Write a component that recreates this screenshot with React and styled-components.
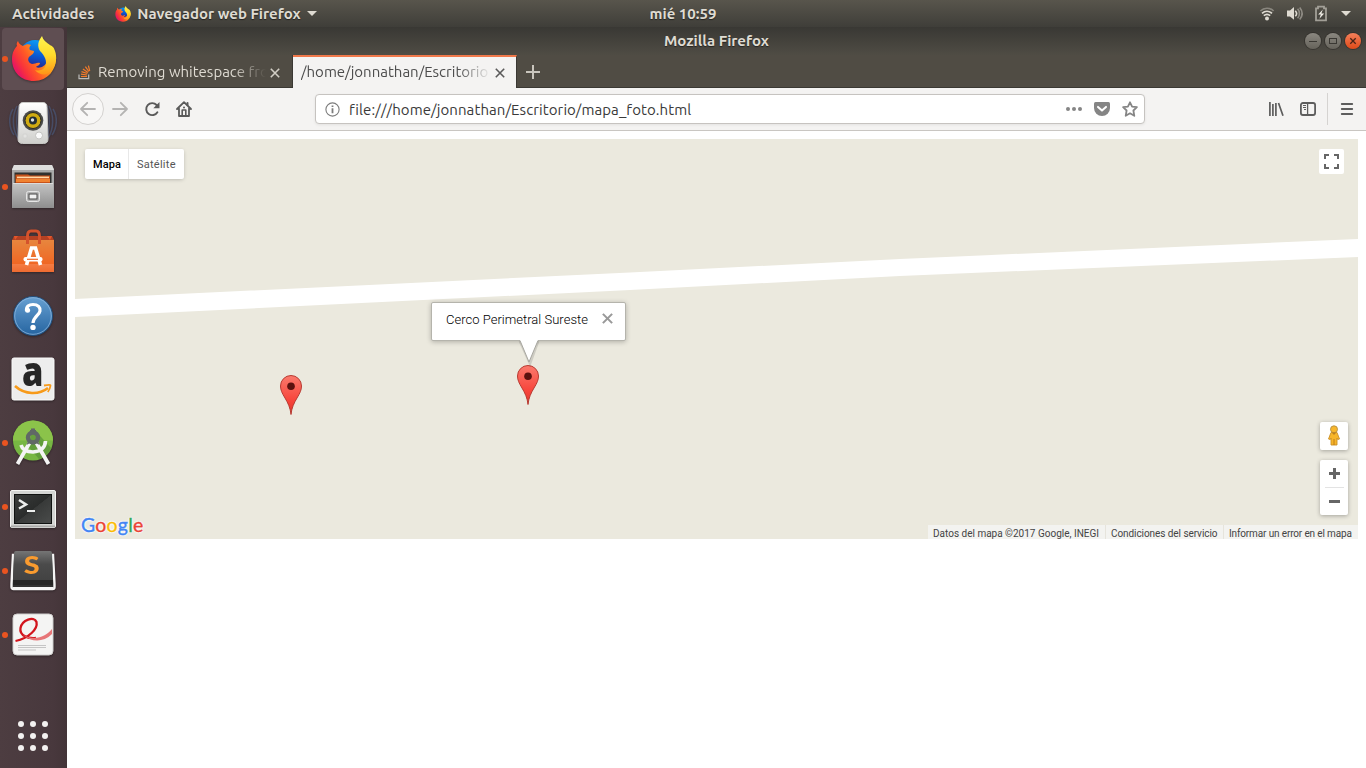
import React from "react";
import styled, { createGlobalStyle } from "styled-components";

const UI = `"Ubuntu", "Noto Sans", "Open Sans", sans-serif`;
const MAP = `"Roboto", Arial, sans-serif`;

const GlobalStyle = createGlobalStyle`
  * { box-sizing: border-box; }
  html, body { margin: 0; height: 100%; overflow: hidden; background: #fff; }
  svg { display: block; flex: none; overflow: visible; }
`;

const Desktop = styled.div`
  width: 1366px;
  height: 768px;
  display: flex;
  flex-direction: column;
  font-family: ${UI};
`;

/* ---------- Top panel ---------- */

const TopPanel = styled.header`
  height: 27px;
  flex: none;
  display: grid;
  grid-template-columns: 1fr auto 1fr;
  align-items: center;
  padding: 0 15px 0 12px;
  background: linear-gradient(#58554c, #3f3e39);
  color: #dfdbd2;
`;

const PanelGroup = styled.div`
  display: flex;
  align-items: center;
  justify-content: ${(p) => (p.$end ? "flex-end" : "flex-start")};
`;

const PanelLabel = styled.span`
  font-size: 15px;
  line-height: 20px;
  font-weight: 600;
  text-shadow: 0 1px 1px rgba(0, 0, 0, 0.5);
  white-space: nowrap;
`;

const Clock = styled(PanelLabel)`
  padding-left: 3px;
`;

const AppMenu = styled.div`
  display: flex;
  align-items: center;
  margin-left: 21px;
  gap: 6px;
`;

const Triangle = styled.i`
  width: 0;
  height: 0;
  border: 5px solid transparent;
  border-top-color: #dfdbd2;
  border-bottom: 0;
`;

const StatusIcons = styled(PanelGroup)`
  gap: 12px;
`;

/* ---------- Dock ---------- */

const Body = styled.div`
  flex: 1;
  min-height: 0;
  display: flex;
`;

const Dock = styled.nav`
  width: 67px;
  flex: none;
  display: flex;
  flex-direction: column;
  background: linear-gradient(90deg, #4d3d41, #48383d 80%, #433438);
`;

const DockItem = styled.div`
  height: 64px;
  flex: none;
  display: flex;
  align-items: center;
  padding: 1px 3px 1px 2px;
`;

const DockTile = styled.div`
  width: 62px;
  height: 62px;
  display: flex;
  align-items: center;
  border-radius: 4px;
  background: ${(p) => (p.$active ? "#5f4e52" : "transparent")};
`;

const RunningDot = styled.i`
  width: 6px;
  height: 6px;
  flex: none;
  border-radius: 50%;
  background: ${(p) => (p.$on ? "#e95420" : "transparent")};
`;

const DockIcon = styled.span`
  margin-left: ${(p) => p.$left}px;
  margin-top: ${(p) => p.$drop || 0}px;
  filter: drop-shadow(0 1px 1px rgba(0, 0, 0, 0.35));
`;

const AppsButton = styled.div`
  margin: auto 0 17px 18px;
`;

/* ---------- Browser window ---------- */

const Window = styled.main`
  flex: 1;
  min-width: 0;
  display: flex;
  flex-direction: column;
  background: #fff;
`;

const TitleBar = styled.div`
  height: 28px;
  flex: none;
  display: grid;
  grid-template-columns: 1fr auto 1fr;
  align-items: center;
  padding: 0 5px 0 5px;
  background: linear-gradient(#393834, #4f4c44);
  color: #dfdbd2;
`;

const WindowTitle = styled(PanelLabel)`
  grid-column: 2;
`;

const WindowButtons = styled.div`
  display: flex;
  justify-content: flex-end;
  gap: 4px;
`;

const WindowButton = styled.span`
  width: 16px;
  height: 16px;
  border-radius: 50%;
  background: ${(p) =>
    p.$close ? "linear-gradient(#f4805b, #df4a18)" : "linear-gradient(#8a8780, #66635b)"};
  box-shadow: 0 0 0 1px rgba(40, 38, 34, 0.5);
`;

const TabStrip = styled.div`
  height: 33px;
  flex: none;
  display: flex;
  background: #504c44;
  box-shadow: inset 0 -1px #3a3833;
`;

const Tab = styled.div`
  width: ${(p) => (p.$active ? "224px" : "226px")};
  display: flex;
  align-items: center;
  padding: ${(p) => (p.$active ? "0 11px 0 8px" : "2px 12px 0 11px")};
  color: ${(p) => (p.$active ? "#4c4c4c" : "#dfdbd2")};
  background: ${(p) => (p.$active ? "#f4f3f2" : "transparent")};
  border-top: ${(p) => (p.$active ? "2px solid #f0784a" : "0")};
  border-right: 1px solid #3a3833;
`;

const TabLabel = styled.span`
  width: ${(p) => p.$width};
  margin-left: ${(p) => p.$indent || "0"};
  margin-right: auto;
  margin-bottom: 2px;
  white-space: nowrap;
  font-size: 15px;
  line-height: 20px;
  mask-image: linear-gradient(90deg, #000 calc(100% - 34px), transparent);
`;

const NewTab = styled.div`
  display: flex;
  align-items: center;
  padding-left: 9px;
`;

const Toolbar = styled.div`
  height: 43px;
  flex: none;
  display: flex;
  align-items: center;
  padding: 0 11px 0 5px;
  background: #f4f3f2;
  border-bottom: 1px solid #c9c6c2;
`;

const NavButtons = styled.div`
  display: flex;
  align-items: center;
  width: 243px;
`;

const BackButton = styled.span`
  width: 32px;
  height: 32px;
  margin-right: 8px;
  display: grid;
  place-items: center;
  border: 1px solid #d4d2d0;
  border-radius: 50%;
  background: #f8f7f6;
`;

const NavIcon = styled.span`
  width: 16px;
  margin-right: 16px;
`;

const UrlBar = styled.div`
  width: 830px;
  height: 30px;
  display: flex;
  align-items: center;
  padding: 0 6px 0 9px;
  border: 1px solid #c6c3c0;
  border-radius: 4px;
  background: #fff;
  box-shadow: 0 1px 3px rgba(0, 0, 0, 0.07);
`;

const UrlText = styled.span`
  flex: 1;
  margin-left: 9px;
  padding-top: 2px;
  color: #3a3a3a;
  font-size: 15px;
  line-height: 20px;
  letter-spacing: 0.09px;
  white-space: nowrap;
`;

const UrlActions = styled.div`
  display: flex;
  align-items: center;
  gap: 12px;
`;

const ToolbarEnd = styled.div`
  margin-left: auto;
  display: flex;
  align-items: center;
  gap: 16px;
`;

const ToolbarDivider = styled.i`
  width: 1px;
  height: 32px;
  background: #d5d3d1;
  margin: 0 -5px 0 -5px;
`;

/* ---------- Map ---------- */

const Page = styled.div`
  flex: 1;
  padding: 8px;
`;

const MapCanvas = styled.section`
  position: relative;
  height: 400px;
  overflow: hidden;
  background: #ebe9de;
  font-family: ${MAP};
`;

const Road = styled.svg`
  width: 100%;
  height: 100%;
`;

const Overlay = styled.div`
  position: absolute;
  top: ${(p) => p.$top};
  right: ${(p) => p.$right};
  bottom: ${(p) => p.$bottom};
  left: ${(p) => p.$left};
`;

const MapTypes = styled.div`
  display: flex;
  height: 30px;
  background: #fff;
  border-radius: 2px;
  box-shadow: 0 1px 4px -1px rgba(0, 0, 0, 0.3);
`;

const MapType = styled.button`
  width: ${(p) => (p.$selected ? "43px" : "56px")};
  padding: 1px 0 0 ${(p) => (p.$selected ? "8px" : "9px")};
  border: 0;
  box-shadow: ${(p) => (p.$selected ? "none" : "inset 1px 0 #e8e8e8")};
  background: none;
  text-align: left;
  font: ${(p) => (p.$selected ? 500 : 400)} 11px/29px ${MAP};
  letter-spacing: ${(p) => (p.$selected ? "0.1px" : "0.25px")};
  color: ${(p) => (p.$selected ? "#000" : "#565656")};
`;

const ControlBox = styled.div`
  width: ${(p) => p.$width || "28px"};
  height: ${(p) => p.$height || "28px"};
  display: flex;
  flex-direction: column;
  align-items: center;
  justify-content: ${(p) => (p.$spread ? "space-evenly" : "center")};
  background: #fff;
  border-radius: 2px;
  box-shadow: ${(p) => (p.$flat ? "none" : "0 1px 4px rgba(0, 0, 0, 0.3)")};
`;

const ControlStack = styled.div`
  display: flex;
  flex-direction: column;
  gap: 10px;
`;

const ZoomDivider = styled.i`
  width: 19px;
  height: 1px;
  background: #e3e3e3;
`;

const InfoBubble = styled.div`
  width: 195px;
  height: 39px;
  display: flex;
  align-items: flex-start;
  padding: 8px 12px 0 14px;
  border: 1px solid #b5b4ac;
  border-radius: 2px;
  background: #fff;
  box-shadow: 0 1px 5px rgba(0, 0, 0, 0.25);
`;

const InfoText = styled.span`
  flex: 1;
  font-size: 13px;
  line-height: 18px;
  font-weight: 300;
  color: #000;
  letter-spacing: 0.02px;
  white-space: nowrap;
`;

const Logo = styled.span`
  font: 400 19.5px/24px "Lato", sans-serif;
  -webkit-text-stroke: 0.4px currentColor;
  letter-spacing: 0.2px;
  text-shadow: 0 0 2px #fff, 0 0 2px #fff, 0 0 3px #fff, 0 0 1px #fff;
`;

const LogoLetter = styled.span`
  color: ${(p) => p.$color};
`;

const Credits = styled.div`
  display: flex;
  height: 14px;
`;

const Credit = styled.span`
  width: ${(p) => p.$width};
  height: 14px;
  padding: 1px 0 0 5px;
  border-left: ${(p) => (p.$first ? "0" : "1px solid #e6e4dc")};
  background: rgba(245, 245, 245, 0.75);
  color: #444;
  font-size: 10px;
  line-height: 15px;
  letter-spacing: ${(p) => p.$spacing};
  white-space: nowrap;
`;

/* ---------- Icons ---------- */

const FirefoxIcon = ({ size, id }) => (
  <svg width={size} height={size} viewBox="0 0 46 46">
    <defs>
      <linearGradient id={`${id}a`} x1="0.9" y1="0.25" x2="0.1" y2="0.7">
        <stop offset="0" stopColor="#ffd52a" />
        <stop offset="0.3" stopColor="#ff9a1c" />
        <stop offset="0.6" stopColor="#ff5a26" />
        <stop offset="0.85" stopColor="#f8313d" />
        <stop offset="1" stopColor="#e8195f" />
      </linearGradient>
      <linearGradient id={`${id}b`} x1="0.6" y1="0" x2="0.4" y2="1">
        <stop offset="0" stopColor="#0a9df5" />
        <stop offset="0.5" stopColor="#0b57d0" />
        <stop offset="1" stopColor="#37106e" />
      </linearGradient>
      <linearGradient id={`${id}c`} x1="0.5" y1="0" x2="0.5" y2="1">
        <stop offset="0" stopColor="#fff44f" />
        <stop offset="0.5" stopColor="#ffdb2c" />
        <stop offset="1" stopColor="#ff9417" />
      </linearGradient>
    </defs>
    <circle cx="24" cy="20" r="16" fill={`url(#${id}b)`} />
    <path
      d="M7 5C8 8 10 9 12 10C15 8 18 8 20 9C18 11 18 13 19 14L23 15C23 18 20 19 18 21C16 24 18 27 21 28C24 28 26 26 29 27C29 29 26 30 25 31C29 33 34 30 36 26C37 22 37 18 35 15L45 20C46 33 37 45 23 45C10 45 1 36 1 23C1 16 4 12 6 10C5 8 6 6 7 5Z"
      fill={`url(#${id}a)`}
    />
    <path
      d="M31 0C27 5 26 10 29 15C33 19 37 25 34 31C31 35 27 35 24 34C28 39 35 40 39 36C46 30 46 20 44 15C43 11 41 10 39 9C35 6 32 4 31 0Z"
      fill={`url(#${id}c)`}
    />
  </svg>
);

const SpeakerIcon = () => (
  <svg width="50" height="50" viewBox="0 0 50 50">
    <defs>
      <linearGradient id="spk" x2="0" y2="1">
        <stop stopColor="#fff" />
        <stop offset="1" stopColor="#cfcfcc" />
      </linearGradient>
    </defs>
    <g fill="none" stroke="#4b5e84" strokeWidth="1.5" opacity="0.6">
      <path d="M9 7C4 16 4 30 10 39M5 10C0 18 1 29 6 36M41 7C46 16 46 30 40 39M45 10C50 18 49 29 44 36M12 5C8 13 7 32 13 41M38 5C42 13 43 32 37 41" />
    </g>
    <path d="M15 3.5H35Q39 3.5 39 8.5L40 40Q40 44.5 35.5 44.5H14.5Q10 44.5 10 40L11 8.5Q11 3.5 15 3.5Z" fill="url(#spk)" stroke="#c7c7c4" />
    <circle cx="25" cy="21.5" r="10.3" fill="#4b4c4c" />
    <circle cx="25" cy="21.5" r="8" fill="#d0ab12" stroke="#2b2b25" />
    <circle cx="25" cy="21.5" r="4" fill="#242f36" />
    <circle cx="24.5" cy="21" r="1.7" fill="#dfe5e7" />
    <circle cx="31" cy="36.5" r="3.5" fill="#fafafa" stroke="#c4c4c2" />
    <rect x="15" y="35" width="4" height="4" rx="1" fill="#e3e3e1" stroke="#d2d2d0" />
  </svg>
);

const FilesIcon = () => (
  <svg width="44" height="46" viewBox="0 0 44 46">
    <defs>
      <linearGradient id="fil" x2="0" y2="1">
        <stop stopColor="#c4c4c4" />
        <stop offset="1" stopColor="#8e8e8e" />
      </linearGradient>
    </defs>
    <path d="M3 1H41L43 5V44H1V5Z" fill="#a9a9a9" />
    <path d="M3 1H41L43 6H1Z" fill="#dededd" />
    <rect x="3.5" y="8.5" width="37" height="11" fill="#30302f" />
    <path d="M4.5 10.5H17L19 11.5H39V19H4.5Z" fill="#c9531a" />
    <path d="M6 13.4H38" stroke="#ffd9a8" strokeWidth="1.6" />
    <path d="M5 16.4H39" stroke="#f08231" strokeWidth="3" />
    <path d="M2 19H42L43 44H1Z" fill="url(#fil)" />
    <path d="M2 19.5H42" stroke="#dcdcdc" />
    <rect x="15.5" y="27.5" width="13" height="10" rx="2" fill="#b3b3b3" stroke="#e6e6e6" />
    <rect x="18" y="30" width="8" height="5" fill="#f1f1f1" stroke="#464646" />
  </svg>
);

const SoftwareIcon = () => (
  <svg width="44" height="46" viewBox="0 0 44 46">
    <defs>
      <linearGradient id="sof" x2="0" y2="1">
        <stop stopColor="#e7863e" />
        <stop offset="0.75" stopColor="#f06724" />
        <stop offset="0.76" stopColor="#f47c43" />
        <stop offset="1" stopColor="#ee6b31" />
      </linearGradient>
    </defs>
    <path d="M1 11L3 7H41L43 11Z" fill="#b34123" />
    <rect x="1" y="11" width="42" height="32" fill="url(#sof)" />
    <path d="M3 7L4 11L7 7M41 7L39 11L36 7" fill="#e4562b" />
    <path d="M16.5 15V7Q16.5 2 20 2H25Q28.5 2 28.5 7V15" fill="none" stroke="#d4522c" strokeWidth="3" />
    <path d="M15.5 36L20.5 19H24.5L29.5 36" fill="none" stroke="#fff" strokeWidth="3.6" />
    <rect x="12.5" y="28" width="19" height="4.6" rx="2" fill="#fff" />
    <path d="M16 30.3H27" stroke="#ef692a" strokeWidth="1.2" />
  </svg>
);

const HelpIcon = () => (
  <svg width="44" height="44" viewBox="0 0 44 44">
    <defs>
      <linearGradient id="hlp" x2="0" y2="1">
        <stop stopColor="#67a0d2" />
        <stop offset="1" stopColor="#2564a0" />
      </linearGradient>
    </defs>
    <circle cx="22" cy="22" r="19.5" fill="url(#hlp)" stroke="#234f7c" />
    <circle cx="22" cy="22" r="18.3" fill="none" stroke="#8bb5dc" strokeWidth="0.8" />
    <path d="M15.5 17C15 12.5 18 10.5 22 10.5C27 10.5 29.5 13.5 29 17C28.4 21 22.5 22.5 22 29" fill="none" stroke="#fff" strokeWidth="3.2" />
    <circle cx="16.6" cy="16.2" r="2.5" fill="#fff" />
    <circle cx="22" cy="33.4" r="2.7" fill="#fff" />
  </svg>
);

const AmazonIcon = () => (
  <svg width="44" height="44" viewBox="0 0 44 44">
    <rect x="1" y="1" width="42" height="42" rx="2" fill="#ededed" stroke="#fafafa" />
    <text transform="translate(21.8 29) scale(0.86 1)" textAnchor="middle" fontFamily="Open Sans, sans-serif" fontWeight="800" fontSize="40" fill="#262626">a</text>
    <path d="M4 29C14 38 28 38 37 31" fill="none" stroke="#f79a1a" strokeWidth="2.6" />
    <path d="M33 28.5C38 27.5 40 27.5 39.4 29C39 32 38 33.5 36.8 35" fill="none" stroke="#f79a1a" strokeWidth="1.8" />
  </svg>
);

const AndroidStudioIcon = () => (
  <svg width="44" height="50" viewBox="0 0 44 50">
    <circle cx="22" cy="22.5" r="20" fill="#77b743" />
    <path d="M2 22.5A20 20 0 0 1 42 22.5Z" fill="#8bc34a" />
    <path d="M22 10L40 30Q36 40 28 41L17 28Z" fill="#568f38" opacity="0.65" />
    <path d="M10 27Q12 34 22 34Q34 33 34.5 23" fill="none" stroke="#f4f4f4" strokeWidth="3.6" />
    <path d="M18.5 25L6.5 46M25.5 25L37.5 46" stroke="#f4f4f4" strokeWidth="3.8" />
    <circle cx="22" cy="19.5" r="5" fill="none" stroke="#606866" strokeWidth="4.4" />
    <path d="M19 15V12H20V10.5H24V12H25V15Z" fill="#606866" />
    <path d="M17 23L15.5 27L19 25ZM27 23L28.5 27L25 25Z" fill="#606866" />
  </svg>
);

const TerminalIcon = () => (
  <svg width="46" height="38" viewBox="0 0 46 38">
    <defs>
      <linearGradient id="trm" x1="0" y1="0" x2="1" y2="1">
        <stop stopColor="#3a3c3b" />
        <stop offset="0.5" stopColor="#2a2c2b" />
        <stop offset="0.51" stopColor="#383a39" />
        <stop offset="1" stopColor="#4a4c4b" />
      </linearGradient>
    </defs>
    <rect x="0.5" y="0.5" width="45" height="37" rx="1.5" fill="#d4d5d3" stroke="#f4f4f2" />
    <path d="M1 36.5H45" stroke="#a9aaa8" strokeWidth="2" />
    <rect x="4.5" y="4.5" width="37" height="29" fill="url(#trm)" stroke="#101211" />
    <path d="M9 10L16 14.5L9 18.5" fill="none" stroke="#eceeed" strokeWidth="2.5" />
    <path d="M17 21H25" stroke="#eceeed" strokeWidth="2" />
  </svg>
);

const SublimeIcon = () => (
  <svg width="46" height="40" viewBox="0 0 46 40">
    <defs>
      <linearGradient id="sub" x2="0" y2="1">
        <stop stopColor="#757575" />
        <stop offset="0.45" stopColor="#4b4b4b" />
        <stop offset="1" stopColor="#434343" />
      </linearGradient>
    </defs>
    <path d="M3 4H43L44.5 33V36Q44.5 38 42.5 38H3.5Q1.5 38 1.5 36V33Z" fill="#303030" stroke="#f5f5f5" strokeWidth="2.4" />
    <path d="M6 0H40Q42 0 42 2L43 29H3L4 2Q4 0 6 0Z" fill="url(#sub)" />
    <path d="M3 29H43V34H3Z" fill="#242424" />
    <path d="M3 37H43" stroke="#f5f5f5" strokeWidth="2" />
    <text x="22" y="22.5" textAnchor="middle" fontFamily="Lato, sans-serif" fontWeight="900" fontSize="24" fill="#f99b2f" transform="translate(-4.6 0) scale(1.2 1)">S</text>
  </svg>
);

const DocumentIcon = () => (
  <svg width="44" height="46" viewBox="0 0 44 46">
    <rect x="2" y="2" width="40" height="41" rx="4" fill="#f4f4f3" stroke="#d0cfce" />
    <path d="M4.5 29C18 26 27 17 25.5 10C23 3.5 11 8 9.5 16C8 24 18 27 25 26" fill="none" stroke="#d2151d" strokeWidth="2.3" />
    <path d="M12 23C24 29 34 25 41 17V22C32 31 20 30 12 23Z" fill="#e77678" />
    <path d="M7 33.5H35M7 35.5H35M7 38H25" stroke="#c5c5c5" />
  </svg>
);

const AppsIcon = () => (
  <svg width="30" height="30" viewBox="0 0 30 30" fill="#f3f1f0">
    {[3, 15, 27].map((y) => [3, 15, 27].map((x) => <circle key={`${x}-${y}`} cx={x} cy={y} r="3" />))}
  </svg>
);

const WifiIcon = () => (
  <svg width="16" height="16" viewBox="0 0 16 16" fill="none" stroke="#dfdbd2" strokeWidth="1.7">
    <path d="M1.4 5C5 1.3 11 1.3 14.6 5" opacity="0.4" />
    <path d="M3 7.3C6 4.7 10 4.7 13 7.3M4.8 9.7C6.8 8 9.2 8 11.2 9.7" />
    <circle cx="8" cy="12.6" r="2" fill="#dfdbd2" stroke="none" />
  </svg>
);

const VolumeIcon = () => (
  <svg width="16" height="16" viewBox="0 0 16 16" fill="none" stroke="#dfdbd2" strokeWidth="1.6">
    <path d="M0 4.5H3L7 1V13.8L3 10.5H0Z" fill="#dfdbd2" stroke="none" />
    <path d="M8.3 4.7C10 6.5 10 8.5 8.3 10.3" />
    <path d="M10.6 2.8C13 5.5 13 9.5 10.6 12.2M12.7 1.5C16 5.5 16 9.5 12.7 13.5" opacity="0.45" />
  </svg>
);

const BatteryIcon = () => (
  <svg width="14" height="16" viewBox="1 0 14 16">
    <path d="M2 2.4H4V0.6H10V2.4H12V14.4H2Z" fill="none" stroke="#a29f97" strokeWidth="1.8" />
    <path d="M8.8 3.6L4.2 8.6H6.8L5.4 12.8L10.2 7.4H7.4Z" fill="#efece5" />
  </svg>
);

const StackOverflowIcon = () => (
  <svg width="13" height="15" viewBox="0 0 13 15" fill="none">
    <path d="M1 9.5V13.6H10.7V9.5" stroke="#bcbbb8" strokeWidth="1.2" />
    <path d="M3 11.5H9M3 9.1L9.1 10M3.5 6.6L9.4 8.5M4.9 4L10 7.4M7.4 1.7L10.8 6.5M10.4 0.6L11.7 6" stroke="#f47b2a" strokeWidth="1.2" />
  </svg>
);

const Cross = ({ size = 10, color, width = 1.6 }) => (
  <svg width={size} height={size} viewBox="0 0 10 10">
    <path d="M0.8 0.8L9.2 9.2M9.2 0.8L0.8 9.2" stroke={color} strokeWidth={width} />
  </svg>
);

const ArrowIcon = ({ flip }) => (
  <svg width="16" height="16" viewBox="0 0 16 16" fill="none" stroke="#b4b3b2" strokeWidth="1.8" strokeLinecap="round" strokeLinejoin="round">
    <path d={flip ? "M1 8H15M8.8 1.8L15 8L8.8 14.2" : "M15 8H1M7.2 1.8L1 8L7.2 14.2"} />
  </svg>
);

const ReloadIcon = () => (
  <svg width="16" height="16" viewBox="0 0 16 16" fill="none" stroke="#5a5a5a" strokeWidth="1.9">
    <path d="M13.4 11.2A6 6 0 1 1 12.6 4" strokeLinecap="round" />
    <path d="M15.5 1V7.3H9.3Z" fill="#5a5a5a" stroke="none" />
  </svg>
);

const HomeIcon = () => (
  <svg width="16" height="16" viewBox="0 0 16 16" fill="none" stroke="#5a5a5a" strokeWidth="1.8" strokeLinejoin="round" strokeLinecap="round">
    <path d="M1 8L8 1.2L15 8M3 7.5V15H13V7.5" />
    <path d="M11.5 2V4" strokeWidth="2" />
    <path d="M6.2 15V9H9.8V15" strokeWidth="1.6" />
    <circle cx="8" cy="6.5" r="1" fill="#5a5a5a" stroke="none" />
  </svg>
);

const InfoIcon = () => (
  <svg width="15" height="15" viewBox="0 0 15 15">
    <circle cx="7.5" cy="7.5" r="6.6" fill="none" stroke="#7c7c7c" strokeWidth="1.1" />
    <path d="M7.5 6.3V11.3M7.5 3.5V5.1" stroke="#7c7c7c" strokeWidth="1.8" />
  </svg>
);

const DotsIcon = () => (
  <svg width="16" height="16" viewBox="0 0 16 16" fill="#858585">
    <circle cx="2" cy="8" r="2" /><circle cx="8" cy="8" r="2" /><circle cx="14" cy="8" r="2" />
  </svg>
);

const PocketIcon = () => (
  <svg width="16" height="16" viewBox="0 0 16 16">
    <path d="M1.5 1H14.5Q16 1 16 2.5V7A8 8 0 0 1 0 7V2.5Q0 1 1.5 1Z" fill="#858585" />
    <path d="M4 5.9L8 9.6L12 5.9" fill="none" stroke="#fff" strokeWidth="2" strokeLinecap="round" strokeLinejoin="round" />
  </svg>
);

const StarIcon = () => (
  <svg width="16" height="16" viewBox="0 0 16 16">
    <path d="M8 1.3L10.1 5.6L14.9 6.2L11.4 9.5L12.3 14.8L8 12.3L3.7 14.8L4.6 9.5L1.1 6.2L5.9 5.6Z" fill="none" stroke="#858585" strokeWidth="1.8" strokeLinejoin="round" />
  </svg>
);

const LibraryIcon = () => (
  <svg width="16" height="16" viewBox="0 0 16 16" stroke="#5d5d5d" strokeWidth="1.7">
    <path d="M1.9 1V15M4.9 3V15M7.9 2V15M10.5 2L15 14.7" />
  </svg>
);

const SidebarIcon = () => (
  <svg width="16" height="16" viewBox="0 0 16 16" fill="none" stroke="#5d5d5d">
    <rect x="0.9" y="2" width="14.2" height="12" rx="2" strokeWidth="1.8" />
    <path d="M7.6 2V14" strokeWidth="1.3" />
    <path d="M3 4.5H6M3 6.5H6M4 8.5H6" />
  </svg>
);

const MenuIcon = () => (
  <svg width="16" height="16" viewBox="0 0 16 16">
    <path d="M2.8 3H13.2M2.8 8H13.2M2.8 13H13.2" stroke="#5d5d5d" strokeWidth="1.9" strokeLinecap="round" />
  </svg>
);

const Pin = ({ id }) => (
  <svg width="24" height="42" viewBox="0 0 24 42">
    <defs>
      <linearGradient id={id} x2="0" y2="1">
        <stop stopColor="#fb7a6d" />
        <stop offset="0.65" stopColor="#f7453b" />
        <stop offset="1" stopColor="#df332b" />
      </linearGradient>
    </defs>
    <path d="M12 40.5C11.4 34 9 29 6 24C3 19 1.5 16 1.5 12A10.5 10.5 0 0 1 22.5 12C22.5 16 21 19 18 24C15 29 12.6 34 12 40.5Z" fill={`url(#${id})`} stroke="#b83b32" strokeWidth="1" />
    <circle cx="12" cy="12.3" r="3.8" fill="#5b110e" />
  </svg>
);

const BubbleTail = () => (
  <svg width="26" height="26" viewBox="0 0 26 26">
    <path d="M4 2L14 24L22 2" fill="none" stroke="#000" strokeOpacity="0.12" strokeWidth="3" />
    <path d="M4 0V1.5L13 23L22 1.5V0Z" fill="#fff" />
    <path d="M4 1.5L13 23L22 1.5" fill="none" stroke="#a8a7a0" />
  </svg>
);

const FullscreenIcon = () => (
  <svg width="15" height="15" viewBox="0 0 15 15" fill="none" stroke="#666" strokeWidth="2">
    <path d="M1 5V1H5M10 1H14V5M14 10V14H10M5 14H1V10" />
  </svg>
);

const PegmanIcon = () => (
  <svg width="14" height="22" viewBox="0 0 14 22">
    <path d="M4 7.5H10L12.5 14L10.7 14.5L10 13V20H4V13L3.3 14.5L1.5 14Z" fill="#f7b529" stroke="#c99028" strokeWidth="0.9" />
    <circle cx="7" cy="4.3" r="3.5" fill="#f8b62a" stroke="#b28d43" strokeWidth="0.9" />
    <path d="M4.6 7.6H9.4L7 10Z" fill="#bd801c" />
    <path d="M7 14V20" stroke="#c07d1b" />
  </svg>
);

const ZoomGlyph = ({ plus }) => (
  <svg width="11" height="11" viewBox="0 0 11 11">
    <path d={plus ? "M0 5.5H11M5.5 0V11" : "M0 5.5H11"} stroke="#666" strokeWidth="3" />
  </svg>
);

/* ---------- Data ---------- */

const dockApps = [
  { name: "firefox", icon: <FirefoxIcon size={46} id="ffd" />, running: true, active: true, left: 3 },
  { name: "speaker", icon: <SpeakerIcon />, left: 0, drop: 1 },
  { name: "files", icon: <FilesIcon />, running: true, left: 3 },
  { name: "software", icon: <SoftwareIcon />, left: 3, drop: 2 },
  { name: "help", icon: <HelpIcon />, left: 3, drop: 2 },
  { name: "amazon", icon: <AmazonIcon />, left: 3 },
  { name: "studio", icon: <AndroidStudioIcon />, running: true, left: 3 },
  { name: "terminal", icon: <TerminalIcon />, running: true, left: 2, drop: 4 },
  { name: "sublime", icon: <SublimeIcon />, running: true, left: 2 },
  { name: "document", icon: <DocumentIcon />, running: true, left: 3 },
];

const logoLetters = [
  ["G", "#4285f4"], ["o", "#ea4335"], ["o", "#fbbc05"],
  ["g", "#4285f4"], ["l", "#34a853"], ["e", "#ea4335"],
];

const pins = [
  { id: "pin1", left: "204px", top: "235px" },
  { id: "pin2", left: "441px", top: "225px" },
];

const MapView = () => (
  <MapCanvas>
    <Road viewBox="0 0 1283 400">
      <path d="M0 160L555 133.5L825 120L1283 100V118L825 137L555 151L0 178Z" fill="#fff" />
    </Road>
    <Overlay $top="10px" $left="10px">
      <MapTypes>
        <MapType $selected>Mapa</MapType>
        <MapType>Satélite</MapType>
      </MapTypes>
    </Overlay>
    <Overlay $top="10px" $right="14px">
      <ControlBox $width="25px" $height="25px" $flat><FullscreenIcon /></ControlBox>
    </Overlay>
    {pins.map((p) => (
      <Overlay key={p.id} $left={p.left} $top={p.top}><Pin id={p.id} /></Overlay>
    ))}
    <Overlay $left="356px" $top="163px">
      <InfoBubble>
        <InfoText>Cerco Perimetral Sureste</InfoText>
        <Overlay $left="171px" $top="11px"><Cross size={11} color="#999" width={1.9} /></Overlay>
      </InfoBubble>
    </Overlay>
    <Overlay $left="441px" $top="200px"><BubbleTail /></Overlay>
    <Overlay $right="10px" $bottom="24px">
      <ControlStack>
        <ControlBox><PegmanIcon /></ControlBox>
        <ControlBox $height="55px" $spread>
          <ZoomGlyph plus />
          <ZoomDivider />
          <ZoomGlyph />
        </ControlBox>
      </ControlStack>
    </Overlay>
    <Overlay $left="6px" $bottom="2px">
      <Logo>
        {logoLetters.map(([ch, color], i) => <LogoLetter key={i} $color={color}>{ch}</LogoLetter>)}
      </Logo>
    </Overlay>
    <Overlay $right="0" $bottom="0">
      <Credits>
        <Credit $first $width="177px">Datos del mapa ©2017 Google, INEGI</Credit>
        <Credit $width="118px" $spacing="-0.07px">Condiciones del servicio</Credit>
        <Credit $width="135px" $spacing="-0.14px">Informar un error en el mapa</Credit>
      </Credits>
    </Overlay>
  </MapCanvas>
);

export default function App() {
  return (
    <Desktop>
      <GlobalStyle />
      <TopPanel>
        <PanelGroup>
          <PanelLabel>Actividades</PanelLabel>
          <AppMenu>
            <FirefoxIcon size={16} id="ffm" />
            <PanelLabel>Navegador web Firefox</PanelLabel>
            <Triangle />
          </AppMenu>
        </PanelGroup>
        <Clock>mié 10:59</Clock>
        <StatusIcons $end>
          <WifiIcon />
          <VolumeIcon />
          <BatteryIcon />
          <Triangle />
        </StatusIcons>
      </TopPanel>
      <Body>
        <Dock>
          {dockApps.map((app) => (
            <DockItem key={app.name}>
              <DockTile $active={app.active}>
                <RunningDot $on={app.running} />
                <DockIcon $left={app.left} $drop={app.drop}>{app.icon}</DockIcon>
              </DockTile>
            </DockItem>
          ))}
          <AppsButton><AppsIcon /></AppsButton>
        </Dock>
        <Window>
          <TitleBar>
            <WindowTitle>Mozilla Firefox</WindowTitle>
            <WindowButtons>
              <WindowButton>
                <svg width="16" height="16"><path d="M4 8.5H12" stroke="#3a3833" /></svg>
              </WindowButton>
              <WindowButton>
                <svg width="16" height="16"><rect x="4.5" y="5.5" width="7" height="5" fill="none" stroke="#3a3833" /></svg>
              </WindowButton>
              <WindowButton $close>
                <svg width="16" height="16"><path d="M5.3 5.3L10.7 10.7M10.7 5.3L5.3 10.7" stroke="#4a2316" strokeWidth="1.3" /></svg>
              </WindowButton>
            </WindowButtons>
          </TitleBar>
          <TabStrip>
            <Tab>
              <StackOverflowIcon />
              <TabLabel $width="168px" $indent="7px">Removing whitespace fro</TabLabel>
              <Cross color="#d2cec5" />
            </Tab>
            <Tab $active>
              <TabLabel $width="190px">/home/jonnathan/Escritorio</TabLabel>
              <Cross color="#5a5a5a" />
            </Tab>
            <NewTab>
              <svg width="14" height="14"><path d="M0 7H14M7 0V14" stroke="#c9c5bd" strokeWidth="2" /></svg>
            </NewTab>
          </TabStrip>
          <Toolbar>
            <NavButtons>
              <BackButton><ArrowIcon /></BackButton>
              <NavIcon><ArrowIcon flip /></NavIcon>
              <NavIcon><ReloadIcon /></NavIcon>
              <NavIcon><HomeIcon /></NavIcon>
            </NavButtons>
            <UrlBar>
              <InfoIcon />
              <UrlText>file:///home/jonnathan/Escritorio/mapa_foto.html</UrlText>
              <UrlActions>
                <DotsIcon />
                <PocketIcon />
                <StarIcon />
              </UrlActions>
            </UrlBar>
            <ToolbarEnd>
              <LibraryIcon />
              <SidebarIcon />
              <ToolbarDivider />
              <MenuIcon />
            </ToolbarEnd>
          </Toolbar>
          <Page><MapView /></Page>
        </Window>
      </Body>
    </Desktop>
  );
}
